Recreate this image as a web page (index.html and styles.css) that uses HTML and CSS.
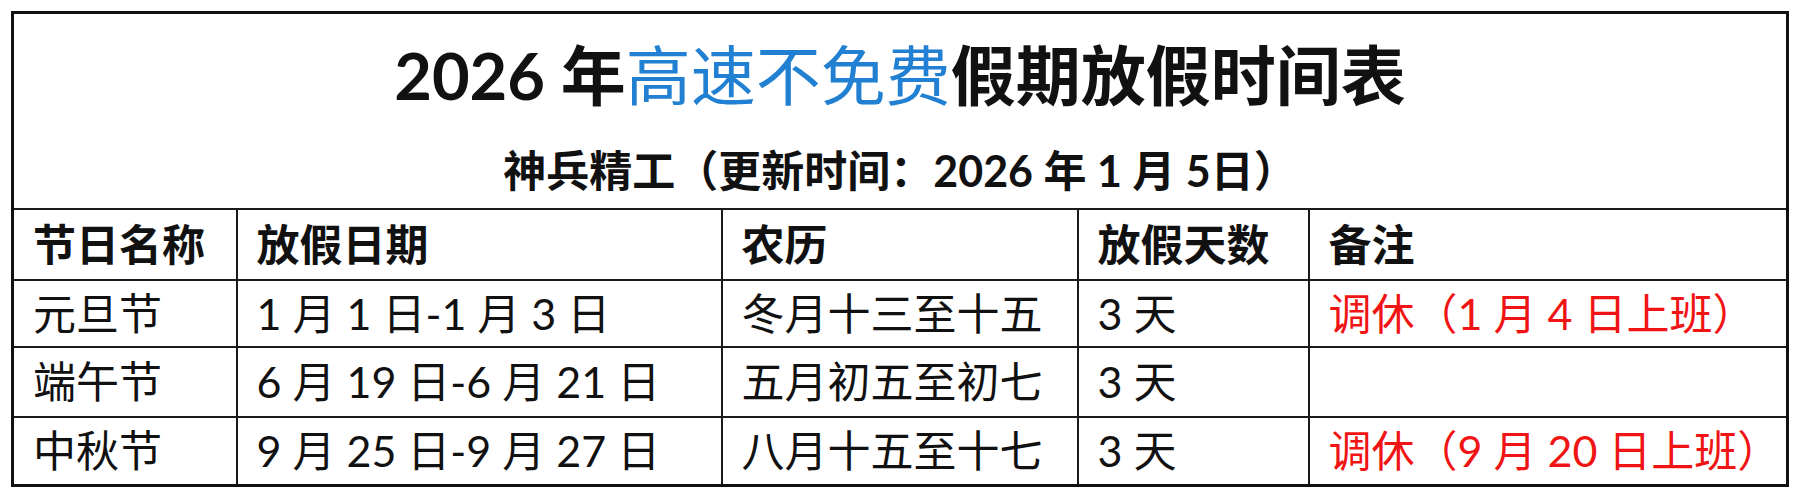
FILE: index.html
```html
<!DOCTYPE html>
<html lang="zh-CN">
<head>
<meta charset="utf-8">
<title>2026年高速不免费假期放假时间表</title>
<link rel="stylesheet" href="styles.css">
</head>
<body>
<table class="sheet">
  <colgroup>
    <col class="c1"><col class="c2"><col class="c3"><col class="c4"><col class="c5">
  </colgroup>
  <tr class="title-row">
    <td colspan="5" class="title-cell">
      <div class="title">2026 年<span class="blue">高速不免费</span>假期放假时间表</div>
      <div class="subtitle">神兵精工（更新时间：2026 年 1 月 5日）</div>
    </td>
  </tr>
  <tr class="head-row">
    <th>节日名称</th><th>放假日期</th><th>农历</th><th>放假天数</th><th>备注</th>
  </tr>
  <tr class="row r1">
    <td>元旦节</td><td>1 月 1 日-1 月 3 日</td><td>冬月十三至十五</td><td>3 天</td><td class="red">调休（1 月 4 日上班）</td>
  </tr>
  <tr class="row r2">
    <td>端午节</td><td>6 月 19 日-6 月 21 日</td><td>五月初五至初七</td><td>3 天</td><td></td>
  </tr>
  <tr class="row r3">
    <td>中秋节</td><td>9 月 25 日-9 月 27 日</td><td>八月十五至十七</td><td>3 天</td><td class="red">调休（9 月 20 日上班）</td>
  </tr>
</table>
</body>
</html>
```

FILE: styles.css
```css
html, body {
  margin: 0;
  padding: 0;
  background: #ffffff;
}

body {
  padding: 11px 0 0 11px;
  font-family: Lato, "Noto Sans CJK SC", sans-serif;
  color: #111;
}

.sheet {
  border-collapse: collapse;
  table-layout: fixed;
  width: 1775px;
  border: 3px solid #111;
}

.c1 { width: 224px; }
.c2 { width: 485px; }
.c3 { width: 356px; }
.c4 { width: 231px; }
.c5 { width: 479px; }

.sheet td, .sheet th {
  border: 2px solid #1a1a1a;
  padding: 0 0 0 19px;
  text-align: left;
  vertical-align: middle;
  white-space: nowrap;
  font-size: 43px;
  font-weight: 400;
  line-height: 1;
}

.title-cell {
  height: 196px;
  box-sizing: border-box;
  padding: 20px 0 0 0 !important;
  vertical-align: top !important;
  text-align: center !important;
}

.title {
  font-size: 65px;
  font-weight: 700;
  line-height: 82px;
  color: #111;
}

.title .blue {
  color: #2280d2;
  font-weight: 400;
}

.subtitle {
  margin-top: 27px;
  font-size: 43px;
  font-weight: 700;
  line-height: 56px;
  color: #111;
}

.head-row th {
  height: 69px;
  font-weight: 700;
  font-size: 43px;
}

.r1 td { height: 65px; }
.r2 td { height: 68px; }
.r3 td { height: 66px; }

.red {
  color: #f01414;
}
```
